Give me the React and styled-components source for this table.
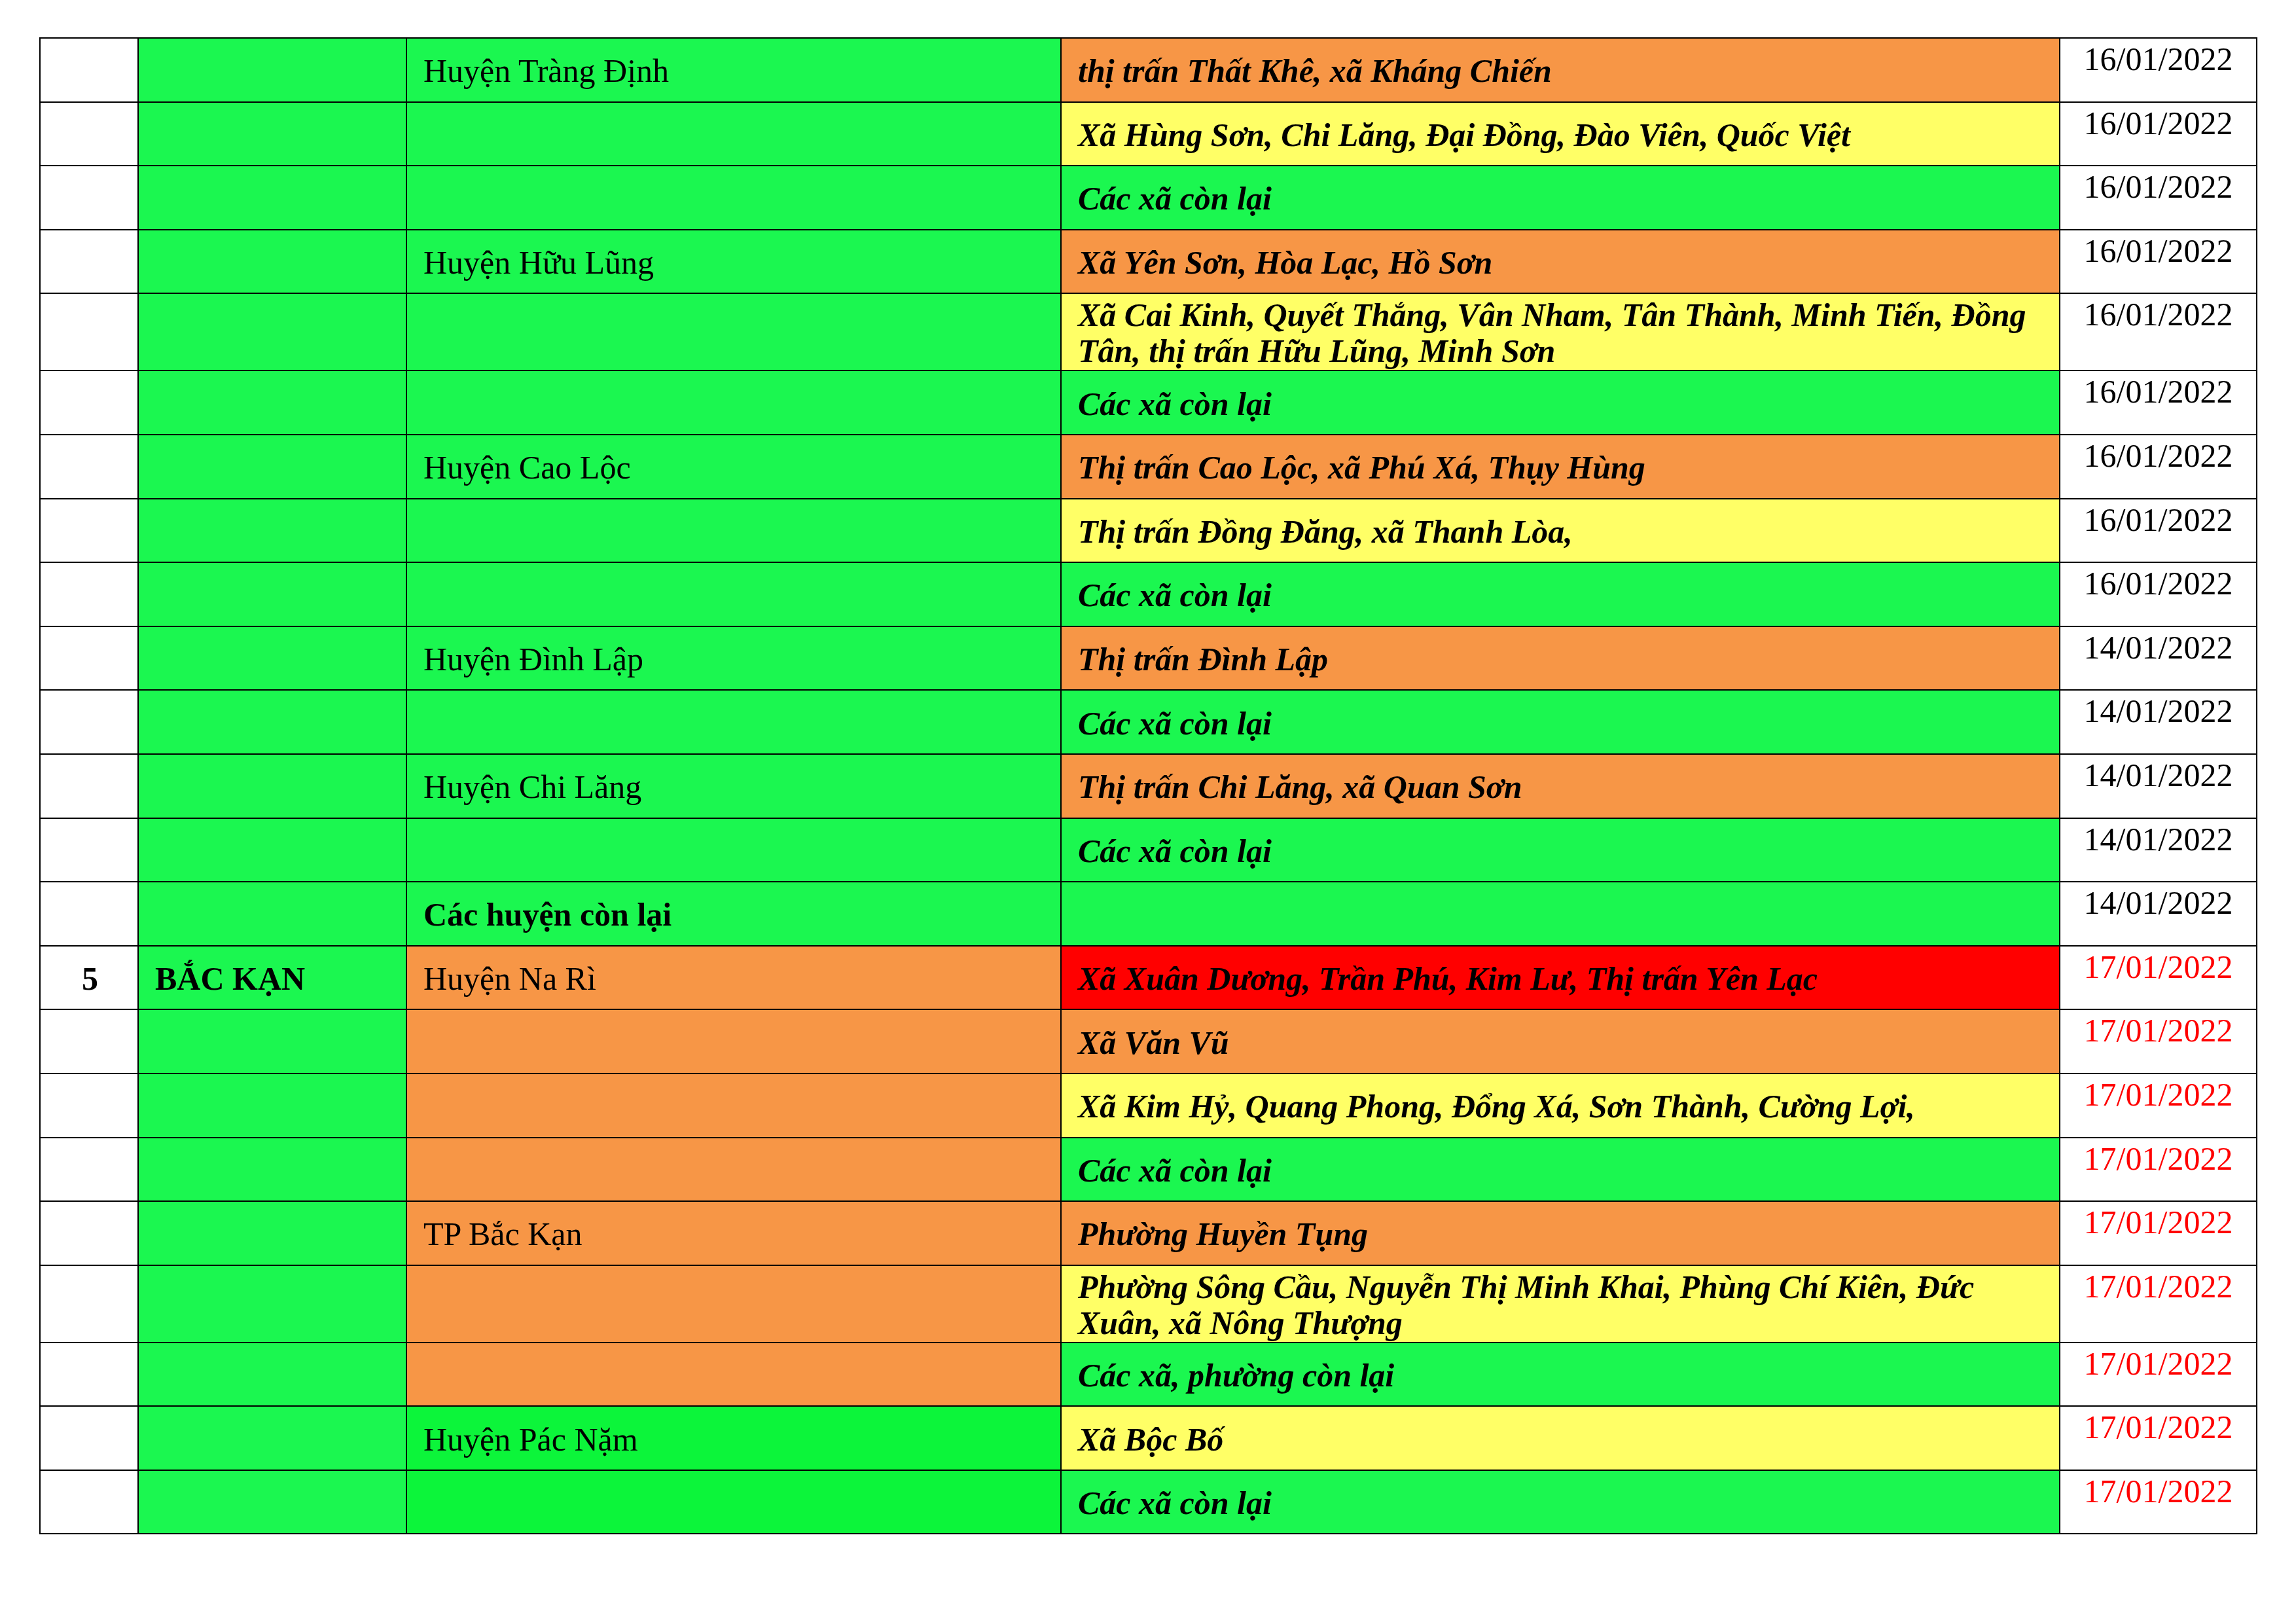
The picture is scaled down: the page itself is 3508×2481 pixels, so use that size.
import React from "react";
import styled, { createGlobalStyle } from "styled-components";

const GREEN = "#1bf750";
const GREEN2 = "#0cf53a";
const ORANGE = "#f79646";
const YELLOW = "#ffff66";
const RED = "#ff0000";

const widths = [150, 410, 1000, 1526, 301];

const rows = [
  { district: "Huyện Tràng Định", ward: "thị trấn Thất Khê, xã Kháng Chiến", wardBg: ORANGE, date: "16/01/2022" },
  { ward: "Xã Hùng Sơn, Chi Lăng, Đại Đồng, Đào Viên, Quốc Việt", wardBg: YELLOW, date: "16/01/2022" },
  { ward: "Các xã còn lại", wardBg: GREEN, date: "16/01/2022" },
  { district: "Huyện Hữu Lũng", ward: "Xã Yên Sơn, Hòa Lạc, Hồ Sơn", wardBg: ORANGE, date: "16/01/2022" },
  {
    ward: "Xã Cai Kinh, Quyết Thắng, Vân Nham, Tân Thành, Minh Tiến, Đồng Tân, thị trấn Hữu Lũng, Minh Sơn",
    wardBg: YELLOW,
    date: "16/01/2022",
  },
  { ward: "Các xã còn lại", wardBg: GREEN, date: "16/01/2022" },
  { district: "Huyện Cao Lộc", ward: "Thị trấn Cao Lộc, xã Phú Xá, Thụy Hùng", wardBg: ORANGE, date: "16/01/2022" },
  { ward: "Thị trấn Đồng Đăng, xã Thanh Lòa,", wardBg: YELLOW, date: "16/01/2022" },
  { ward: "Các xã còn lại", wardBg: GREEN, date: "16/01/2022" },
  { district: "Huyện Đình Lập", ward: "Thị trấn Đình Lập", wardBg: ORANGE, date: "14/01/2022" },
  { ward: "Các xã còn lại", wardBg: GREEN, date: "14/01/2022" },
  { district: "Huyện Chi Lăng", ward: "Thị trấn Chi Lăng, xã Quan Sơn", wardBg: ORANGE, date: "14/01/2022" },
  { ward: "Các xã còn lại", wardBg: GREEN, date: "14/01/2022" },
  { district: "Các huyện còn lại", bold: true, ward: "", wardBg: GREEN, date: "14/01/2022" },
  {
    no: "5",
    province: "BẮC KẠN",
    district: "Huyện Na Rì",
    districtBg: ORANGE,
    ward: "Xã Xuân Dương, Trần Phú, Kim Lư, Thị trấn Yên Lạc",
    wardBg: RED,
    date: "17/01/2022",
    red: true,
  },
  { districtBg: ORANGE, ward: "Xã Văn Vũ", wardBg: ORANGE, date: "17/01/2022", red: true },
  { districtBg: ORANGE, ward: "Xã Kim Hỷ, Quang Phong, Đổng Xá, Sơn Thành, Cường Lợi,", wardBg: YELLOW, date: "17/01/2022", red: true },
  { districtBg: ORANGE, ward: "Các xã còn lại", wardBg: GREEN, date: "17/01/2022", red: true },
  { district: "TP Bắc Kạn", districtBg: ORANGE, ward: "Phường Huyền Tụng", wardBg: ORANGE, date: "17/01/2022", red: true },
  {
    districtBg: ORANGE,
    ward: "Phường Sông Cầu, Nguyễn Thị Minh Khai, Phùng Chí Kiên, Đức Xuân, xã Nông Thượng",
    wardBg: YELLOW,
    date: "17/01/2022",
    red: true,
  },
  { districtBg: ORANGE, ward: "Các xã, phường còn lại", wardBg: GREEN, date: "17/01/2022", red: true },
  { district: "Huyện Pác Nặm", districtBg: GREEN2, ward: "Xã Bộc Bố", wardBg: YELLOW, date: "17/01/2022", red: true },
  { districtBg: GREEN2, ward: "Các xã còn lại", wardBg: GREEN, date: "17/01/2022", red: true },
];

const GlobalStyle = createGlobalStyle`
  body {
    margin: 0;
    background: #fff;
    font-family: "Liberation Serif", "Times New Roman", serif;
  }
`;

const Page = styled.div`
  padding: 57px 0 0 60px;
`;

const Table = styled.table`
  border-collapse: collapse;
  table-layout: fixed;
  width: 3387px;
  border: 2px solid #000;
  font-size: 50px;
  line-height: 55px;
  color: #000;
`;

const Col = styled.col`
  width: ${(p) => p.$w}px;
`;

const Row = styled.tr`
  height: 97.6px;
`;

const Cell = styled.td`
  border-top: 2px solid #000;
  border-bottom: 2px solid #000;
  border-left: 2px solid #000;
  border-right: 2px solid #000;
  padding: 5px 22px 1px 25px;
  vertical-align: middle;
  background: ${(p) => p.$bg || "#fff"};
  font-weight: ${(p) => (p.$bold ? 700 : 400)};
  font-style: ${(p) => (p.$italic ? "italic" : "normal")};
  text-align: ${(p) => p.$align || "left"};
`;

const DateCell = styled.td`
  border: 2px solid #000;
  padding: 4px 0 0 0;
  vertical-align: top;
  text-align: center;
  background: #fff;
  color: ${(p) => (p.$red ? RED : "#000")};
`;

export default function App() {
  return (
    <>
      <GlobalStyle />
      <Page>
        <Table>
          <colgroup>
            {widths.map((w, i) => (
              <Col key={i} $w={w} />
            ))}
          </colgroup>
          <tbody>
            {rows.map((r, i) => (
              <Row key={i}>
                <Cell $align="center" $bold>
                  {r.no}
                </Cell>
                <Cell $bg={GREEN} $bold>
                  {r.province}
                </Cell>
                <Cell $bg={r.districtBg || GREEN} $bold={r.bold}>
                  {r.district}
                </Cell>
                <Cell $bg={r.wardBg} $bold $italic>
                  {r.ward}
                </Cell>
                <DateCell $red={r.red}>{r.date}</DateCell>
              </Row>
            ))}
          </tbody>
        </Table>
      </Page>
    </>
  );
}
